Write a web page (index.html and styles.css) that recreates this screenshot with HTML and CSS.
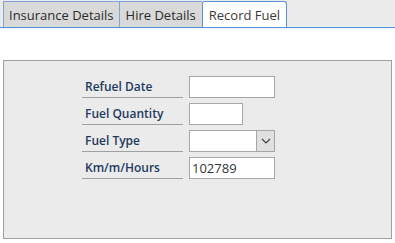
FILE: index.html
```html
<!DOCTYPE html>
<html>
<head>
<meta charset="utf-8">
<link rel="stylesheet" href="styles.css">
</head>
<body>
<div class="tabstrip">
  <div class="tab first">Insurance Details</div>
  <div class="tab">Hire Details</div>
  <div class="tab active">Record Fuel</div>
</div>
<div class="panel">
  <div class="form">
    <div class="label">Refuel Date</div>
    <div class="field"><div class="input w86"></div></div>
    <div class="label">Fuel Quantity</div>
    <div class="field"><div class="input w54"></div></div>
    <div class="label">Fuel Type</div>
    <div class="field">
      <div class="combo">
        <div class="combo-text"></div>
        <div class="combo-btn">
          <svg width="10" height="6" viewBox="0 0 10 6"><path d="M1 1 L5 5 L9 1" fill="none" stroke="#404040" stroke-width="1.2"/></svg>
        </div>
      </div>
    </div>
    <div class="label">Km/m/Hours</div>
    <div class="field"><div class="input w86 value">102789</div></div>
  </div>
</div>
</body>
</html>
```

FILE: styles.css
```css
html, body {
  margin: 0;
  padding: 0;
  background: #ffffff;
  width: 395px;
  height: 243px;
  overflow: hidden;
  font-family: "Open Sans", "Noto Sans", sans-serif;
}

.tabstrip {
  display: flex;
  align-items: flex-end;
  height: 27px;
  padding-left: 3px;
  background: #ebebeb;
  border-bottom: 1px solid #5b8fd6;
}

.tab {
  box-sizing: border-box;
  height: 26px;
  padding: 0 6px;
  display: flex;
  align-items: center;
  background: #d9d9d9;
  border: 1px solid #7ea3d6;
  border-bottom: none;
  border-right: none;
  font-size: 13px;
  color: #2b2b2b;
}

.tab.first {
  padding: 0 5px;
}

.tab.active {
  background: #ffffff;
  border-right: 1px solid #5b8fd6;
  border-color: #5b8fd6;
  border-radius: 3px 3px 0 0;
  color: #3a3a3a;
  padding: 0 6px;
}

.panel {
  box-sizing: border-box;
  margin: 32px 0 0 3px;
  width: 389px;
  height: 179px;
  background: #ebebeb;
  border: 1px solid #a0a0a0;
  padding: 15px 0 0 78px;
}

.form {
  display: grid;
  grid-template-columns: 101px auto;
  column-gap: 6px;
  row-gap: 5px;
}

.label {
  box-sizing: border-box;
  height: 22px;
  border-bottom: 1px solid #a0a0a0;
  padding-left: 3px;
  display: flex;
  align-items: center;
  font-size: 12px;
  font-weight: 600;
  color: #1f3a60;
}

.field {
  display: flex;
}

.input {
  box-sizing: border-box;
  height: 22px;
  background: #ffffff;
  border: 1px solid #a6a6a6;
}

.w86 { width: 86px; }
.w54 { width: 54px; }

.value {
  font-size: 13px;
  color: #333333;
  padding-left: 2px;
  display: flex;
  align-items: center;
}

.combo {
  box-sizing: border-box;
  width: 86px;
  height: 22px;
  display: flex;
  border: 1px solid #a6a6a6;
  background: #ffffff;
}

.combo-text {
  flex: 1;
}

.combo-btn {
  width: 17px;
  background: #e0e0e0;
  border-left: 1px solid #a6a6a6;
  display: flex;
  align-items: center;
  justify-content: center;
}
```
